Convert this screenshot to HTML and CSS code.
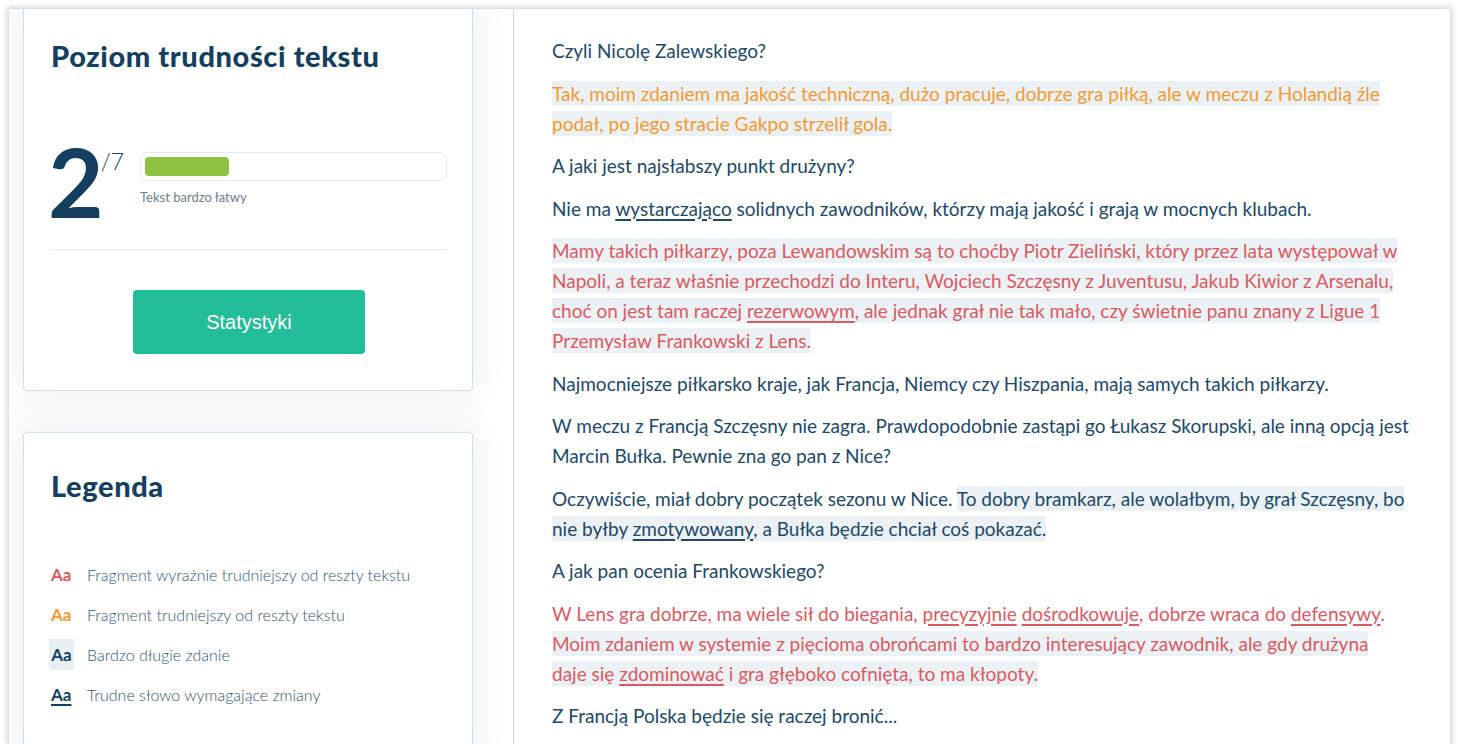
FILE: index.html
```html
<!DOCTYPE html>
<html lang="pl">
<head>
<meta charset="utf-8">
<title>Poziom trudności tekstu</title>
<link rel="stylesheet" href="styles.css">
</head>
<body>
<div class="frame">
  <aside class="sidebar">
    <section class="card card-level">
      <h2 class="card-title">Poziom trudności tekstu</h2>
      <div class="score">
        <div class="score-num">2<span class="score-max">/7</span></div>
        <div class="score-info">
          <div class="bar"><div class="bar-fill" style="width:84px"></div></div>
          <div class="bar-label">Tekst bardzo łatwy</div>
        </div>
      </div>
      <div class="divider"></div>
      <div class="btn-row"><button class="btn">Statystyki</button></div>
    </section>
    <section class="card card-legend">
      <h2 class="card-title">Legenda</h2>
      <ul class="legend">
        <li><span class="aa aa-red">Aa</span><span class="legend-text">Fragment wyraźnie trudniejszy od reszty tekstu</span></li>
        <li><span class="aa aa-orange">Aa</span><span class="legend-text">Fragment trudniejszy od reszty tekstu</span></li>
        <li><span class="aa aa-long">Aa</span><span class="legend-text">Bardzo długie zdanie</span></li>
        <li><span class="aa aa-word">Aa</span><span class="legend-text">Trudne słowo wymagające zmiany</span></li>
      </ul>
    </section>
  </aside>
  <main class="article">
    <p>Czyli Nicolę Zalewskiego?</p>
    <p class="orange"><span class="hl">Tak, moim zdaniem ma jakość techniczną, dużo pracuje, dobrze gra piłką, ale w meczu z Holandią źle podał, po jego stracie Gakpo strzelił gola.</span></p>
    <p>A jaki jest najsłabszy punkt drużyny?</p>
    <p>Nie ma <span class="word">wystarczająco</span> solidnych zawodników, którzy mają jakość i grają w mocnych klubach.</p>
    <p class="red"><span class="hl">Mamy takich piłkarzy, poza Lewandowskim są to choćby Piotr Zieliński, który przez lata występował w Napoli, a teraz właśnie przechodzi do Interu, Wojciech Szczęsny z Juventusu, Jakub Kiwior z Arsenalu, choć on jest tam raczej <span class="word">rezerwowym</span>, ale jednak grał nie tak mało, czy świetnie panu znany z Ligue 1 Przemysław Frankowski z Lens.</span></p>
    <p>Najmocniejsze piłkarsko kraje, jak Francja, Niemcy czy Hiszpania, mają samych takich piłkarzy.</p>
    <p>W meczu z Francją Szczęsny nie zagra. Prawdopodobnie zastąpi go Łukasz Skorupski, ale inną opcją jest Marcin Bułka. Pewnie zna go pan z Nice?</p>
    <p>Oczywiście, miał dobry początek sezonu w Nice. <span class="hl">To dobry bramkarz, ale wolałbym, by grał Szczęsny, bo nie byłby <span class="word">zmotywowany</span>, a Bułka będzie chciał coś pokazać.</span></p>
    <p>A jak pan ocenia Frankowskiego?</p>
    <p class="red">W Lens gra dobrze, ma wiele sił do biegania, <span class="word">precyzyjnie</span> <span class="word">dośrodkowuje</span>, dobrze wraca do <span class="word">defensywy</span>. <span class="hl">Moim zdaniem w systemie z pięcioma obrońcami to bardzo interesujący zawodnik, ale gdy drużyna daje&nbsp;się <span class="word">zdominować</span> i gra głęboko cofnięta, to ma kłopoty.</span></p>
    <p>Z Francją Polska będzie się raczej bronić...</p>
  </main>
</div>
</body>
</html>
```
FILE: styles.css
```css
* { box-sizing: border-box; }
html, body { margin: 0; padding: 0; background: #fff; }
body {
  font-family: Lato, "Open Sans", sans-serif;
  color: #214869;
}
.frame {
  margin: 9px 0 0 9px;
  width: 1441px;
  height: 735px;
  display: flex;
  overflow: hidden;
  background: #fff;
  box-shadow: 0 0 6px 2px rgba(0, 0, 0, 0.18);
}
.sidebar {
  width: 505px;
  flex: none;
  padding: 0 40px 0 14px;
  border-right: 1px solid #d6d6d6;
  background: #fff;
  display: flex;
  flex-direction: column;
  gap: 41px;
}
.card {
  background: #fff;
  border: 1px solid #cfe0ee;
  border-radius: 4px;
  box-shadow: 0 0 30px 6px rgba(40, 100, 160, 0.09);
  padding: 0 25px 0 27px;
  flex: none;
}
.card-level {
  border-top: 0;
  border-radius: 0 0 4px 4px;
  padding-top: 30px;
  padding-bottom: 36px;
}
.card-title {
  margin: 0;
  font-size: 29px;
  line-height: 34px;
  font-weight: 900;
  letter-spacing: 0.6px;
  color: #143f60;
}
.score {
  display: flex;
  align-items: flex-start;
  margin-top: 79px;
}
.score-num {
  font-size: 96px;
  line-height: 96px;
  font-weight: 700;
  color: #143f60;
  width: 92px;
  display: flex;
  align-items: flex-start;
  margin-top: -19px;
  margin-left: -3px;
}
.score-max {
  font-size: 23px;
  line-height: 23px;
  font-weight: 300;
  margin-top: 17px;
  margin-left: -3px;
}
.score-info { flex: 1; }
.bar {
  height: 29px;
  border: 1px solid #e3ecf2;
  border-radius: 7px;
  padding: 4px;
  background: #fff;
}
.bar-fill {
  height: 19px;
  background: #8cc43f;
  border-radius: 4px;
}
.bar-label {
  margin-top: 8px;
  font-size: 13px;
  color: #6e7d8e;
}
.divider {
  height: 1px;
  background: #e3ecf2;
  margin-top: 20px;
  margin-left: -1px;
}
.btn-row {
  display: flex;
  justify-content: center;
  padding-top: 40px;
}
.btn {
  width: 232px;
  height: 64px;
  border: 0;
  border-radius: 4px;
  background: #24bd99;
  color: #fff;
  font-family: "Liberation Sans", Arial, sans-serif;
  font-size: 20px;
}
.card-legend {
  padding-top: 36px;
  padding-bottom: 40px;
}
.legend {
  list-style: none;
  margin: 51px 0 0;
  padding: 0;
}
.legend li {
  display: flex;
  align-items: center;
  height: 40px;
}
.aa {
  width: 36px;
  flex: none;
  font-size: 17px;
  font-weight: 700;
}
.aa-red { color: #da5a63; }
.aa-orange { color: #f39a35; }
.aa-long {
  color: #143f60;
  background: #e9f0f4;
  width: 25px;
  text-align: center;
  padding: 5px 0;
  margin: 0 13px 0 -2px;
}
.aa-word {
  color: #143f60;
  text-decoration: underline;
  text-underline-offset: 3px;
  text-decoration-thickness: 2px;
}
.legend-text {
  font-size: 16px;
  font-weight: 300;
  color: #34556f;
}
.article {
  flex: 1;
  padding: 27px 40px 0 38px;
  font-size: 19px;
  line-height: 30px;
  overflow: hidden;
}
.article p {
  margin: 0 0 12.5px;
  max-width: 860px;
}
.hl {
  background: #ebf1f4;
  padding: 1px 0;
}
.orange { color: #f39a35; }
.red { color: #da5a63; }
.word {
  text-decoration: underline;
  text-underline-offset: 3px;
  text-decoration-thickness: 1.5px;
}
```
